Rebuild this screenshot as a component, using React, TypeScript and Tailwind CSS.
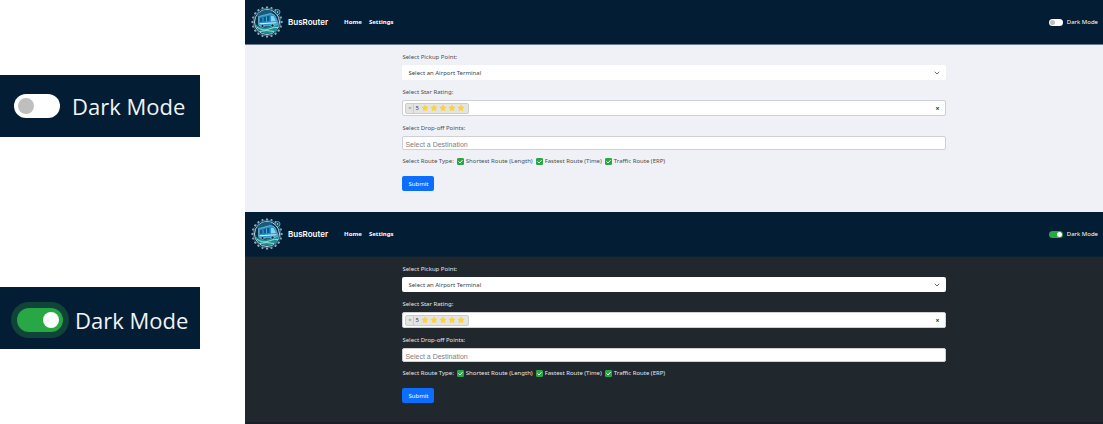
import { useId, useState } from "react";

const SWITCH =
  "flex shrink-0 cursor-pointer appearance-none items-center rounded-full bg-white before:block before:rounded-full before:bg-[#bfbfbf] before:content-[''] checked:justify-end checked:bg-[#28a745] checked:before:bg-white";

const TEETH = Array.from({ length: 20 }, (_, i) => i * 18);

function Logo() {
  return (
    <svg viewBox="0 0 64 64" className="size-8 shrink-0" aria-hidden="true">
      <g fill="#a9bdc9">
        {TEETH.map((a) => (
          <rect key={a} x="30" y="1" width="4" height="4" rx="1" transform={`rotate(${a} 32 32)`} />
        ))}
      </g>
      <circle cx="32" cy="32" r="28" fill="none" stroke="#3f7f98" strokeWidth="1.500" />
      <circle cx="32" cy="32" r="25" fill="#07324b" stroke="#c9d8e0" strokeWidth="2" />
      <path d="M10 22 A24 24 0 0 1 44 11 L38 17 L16 20 Z" fill="#145c7c" />
      <path d="M9 36 Q20 46 33 42 T56 36 Q54 50 42 54 Q30 58 19 51 Q10 45 9 36Z" fill="#1a8f93" />
      <path d="M11 42 Q24 51 36 46 T54 43" fill="none" stroke="#8fe0cf" strokeWidth="2" />
      <path d="M18 51 Q30 47 46 51" fill="none" stroke="#cfeee8" strokeWidth="1.500" />
      <path d="M15 21 L39 15 Q46 15 49 21 L54 34 Q54 38 50 38 L21 41 Q15 41 15 36Z" fill="#2b93d1" stroke="#b9dcea" strokeWidth="1" />
      <path d="M18 24 L37 19 V30 L18 32Z" fill="#0b5a8c" />
      <path d="M40 20 L45 20 L50 30 L40 31Z" fill="#7fd8ee" />
      <path d="M24 23 V31 M31 21 V31" stroke="#5fc3e8" strokeWidth="1.500" />
      <path d="M17 35.500 L51 33.500" stroke="#e6f3f8" strokeWidth="2" />
      <circle cx="23" cy="40" r="3" fill="#062c42" stroke="#c9e3ec" strokeWidth="1" />
      <circle cx="43" cy="39" r="3" fill="#062c42" stroke="#c9e3ec" strokeWidth="1" />
      <circle cx="53" cy="12" r="5" fill="#0b4560" stroke="#6fc3d0" strokeWidth="1.500" />
      <circle cx="53" cy="12" r="1.500" fill="#dff6f8" />
    </svg>
  );
}

function Star() {
  return (
    <svg viewBox="0 0 24 24" className="size-2" aria-hidden="true">
      <path
        d="M12 2.500l2.900 6 6.600.9-4.800 4.600 1.200 6.600L12 17.500l-5.900 3.100 1.200-6.600L2.500 9.400l6.600-.9z"
        fill="#fdd231"
        stroke="#fdd231"
        strokeWidth="1.500"
        strokeLinejoin="round"
      />
    </svg>
  );
}

function RouteOption({ label }: { label: string }) {
  return (
    <label className="flex items-center gap-0.5">
      <span className="relative flex size-[7px]">
        <input
          type="checkbox"
          defaultChecked
          className="peer size-[7px] appearance-none rounded-[1px] border border-gray-400 bg-white checked:border-[#28a745] checked:bg-[#28a745]"
        />
        <svg viewBox="0 0 14 14" className="pointer-events-none absolute inset-0 hidden size-[7px] peer-checked:block" aria-hidden="true">
          <path d="M3.500 7.500l2.500 2.500 4.500-5" fill="none" stroke="#fff" strokeWidth="2" strokeLinecap="round" strokeLinejoin="round" />
        </svg>
      </span>
      {label}
    </label>
  );
}

function Screen({ initialDark = false }: { initialDark?: boolean }) {
  const [dark, setDark] = useState(initialDark);
  const id = useId();
  return (
    <section
      className={`flex flex-col font-['Noto_Sans',sans-serif] text-[6px] leading-[10px] ${dark ? "border-b-2 border-[#1b1d28] bg-[#20272d] text-[#e4e6e8]" : "bg-[#f0f1f6] text-[#4b4f54]"}`}
    >
      <header className={`flex items-center border-b bg-[#031e34] py-1.5 pr-[5px] pl-1.5 text-white ${dark ? "border-[#0d2233]" : "border-[#6b7d8c]"}`}>
        <a href="#home" className="flex items-center gap-[5px] font-['Inter',sans-serif] text-[8px] font-semibold">
          <Logo />
          BusRouter
        </a>
        <nav className="ml-4 flex gap-[7px] font-bold">
          <a href="#home">Home</a>
          <a href="#settings">Settings</a>
        </nav>
        <label className="ml-auto flex items-center gap-1">
          <input
            type="checkbox"
            role="switch"
            checked={dark}
            onChange={(e) => setDark(e.target.checked)}
            className={`${SWITCH} h-[7px] w-[14px] px-px before:size-[5px]`}
          />
          Dark Mode
        </label>
      </header>

      <form className="mx-auto flex w-[63.300%] flex-col pt-[7px]" onSubmit={(e) => e.preventDefault()}>
        <label htmlFor={`${id}-pickup`}>Select Pickup Point:</label>
        <div className="relative mt-[3px] mb-[7px]">
          <select
            id={`${id}-pickup`}
            className="block h-[15px] w-full appearance-none rounded-[2px] bg-white px-1.5 text-[#3c4146]"
          >
            <option>Select an Airport Terminal</option>
          </select>
          <svg viewBox="0 0 12 12" className="pointer-events-none absolute top-[5px] right-1.5 size-1.5" aria-hidden="true">
            <path d="M1.500 3.500L6 8l4.500-4.500" fill="none" stroke="#555b61" strokeWidth="1.800" />
          </svg>
        </div>

        <span id={`${id}-rating`}>Select Star Rating:</span>
        <div
          role="group"
          aria-labelledby={`${id}-rating`}
          className="mt-[3px] mb-[7px] flex h-4 items-center rounded-[2px] border border-[#cfd0d3] bg-white pr-1 pl-0.5 text-[#3c4146]"
        >
          <span className="flex h-[11px] items-center rounded-[2px] border border-[#cccccc] bg-[#e4e4e4] pr-[3px]">
            <button type="button" aria-label="Remove 5 stars" className="h-full w-2 border-r border-[#cccccc] text-[6px] leading-none text-[#888]">
              ×
            </button>
            <span className="mr-0.5 ml-px">5</span>
            <span className="flex gap-px">
              <Star />
              <Star />
              <Star />
              <Star />
              <Star />
            </span>
          </span>
          <button type="button" aria-label="Clear rating" className="ml-auto w-1.5 text-center text-[7px] leading-none font-bold text-[#333]">
            ×
          </button>
        </div>

        <label htmlFor={`${id}-dropoff`}>Select Drop-off Points:</label>
        <input
          id={`${id}-dropoff`}
          type="text"
          placeholder="Select a Destination"
          className="mt-[3px] mb-1.5 h-[14px] rounded-[2px] border border-[#cfd0d3] bg-white px-0.5 pt-0.5 font-['Liberation_Sans',sans-serif] text-[7px] text-[#3c4146] placeholder:text-[#808080]"
        />

        <fieldset className="flex items-center gap-[3px]">
          <span>Select Route Type:</span>
          <RouteOption label="Shortest Route (Length)" />
          <RouteOption label="Fastest Route (Time)" />
          <RouteOption label="Traffic Route (ERP)" />
        </fieldset>

        <button type="submit" className="mt-2.5 h-[15px] self-start rounded-[2px] bg-[#0d6efd] px-1.5 text-white">
          Submit
        </button>
      </form>
    </section>
  );
}

function SwitchCard({ on = false }: { on?: boolean }) {
  return (
    <div className="flex items-center">
      <label
        className={`flex h-[62px] w-[200px] items-center gap-3 bg-[#031e34] font-['Open_Sans',sans-serif] text-[22px] leading-none text-[#f1f3f5] ${on ? "pt-1 pl-[17px]" : "pl-[14px]"}`}
      >
        <input
          type="checkbox"
          role="switch"
          defaultChecked={on}
          className={`${SWITCH} h-6 w-[46px] px-1 before:size-4 checked:ring-[6px] checked:ring-[#114438]`}
        />
        Dark Mode
      </label>
    </div>
  );
}

export default function App() {
  return (
    <main className="flex min-h-screen bg-white">
      <div className="grid w-[245px] shrink-0 grid-rows-2">
        <SwitchCard />
        <SwitchCard on />
      </div>
      <div className="grid flex-1 grid-rows-2">
        <Screen />
        <Screen initialDark />
      </div>
    </main>
  );
}
